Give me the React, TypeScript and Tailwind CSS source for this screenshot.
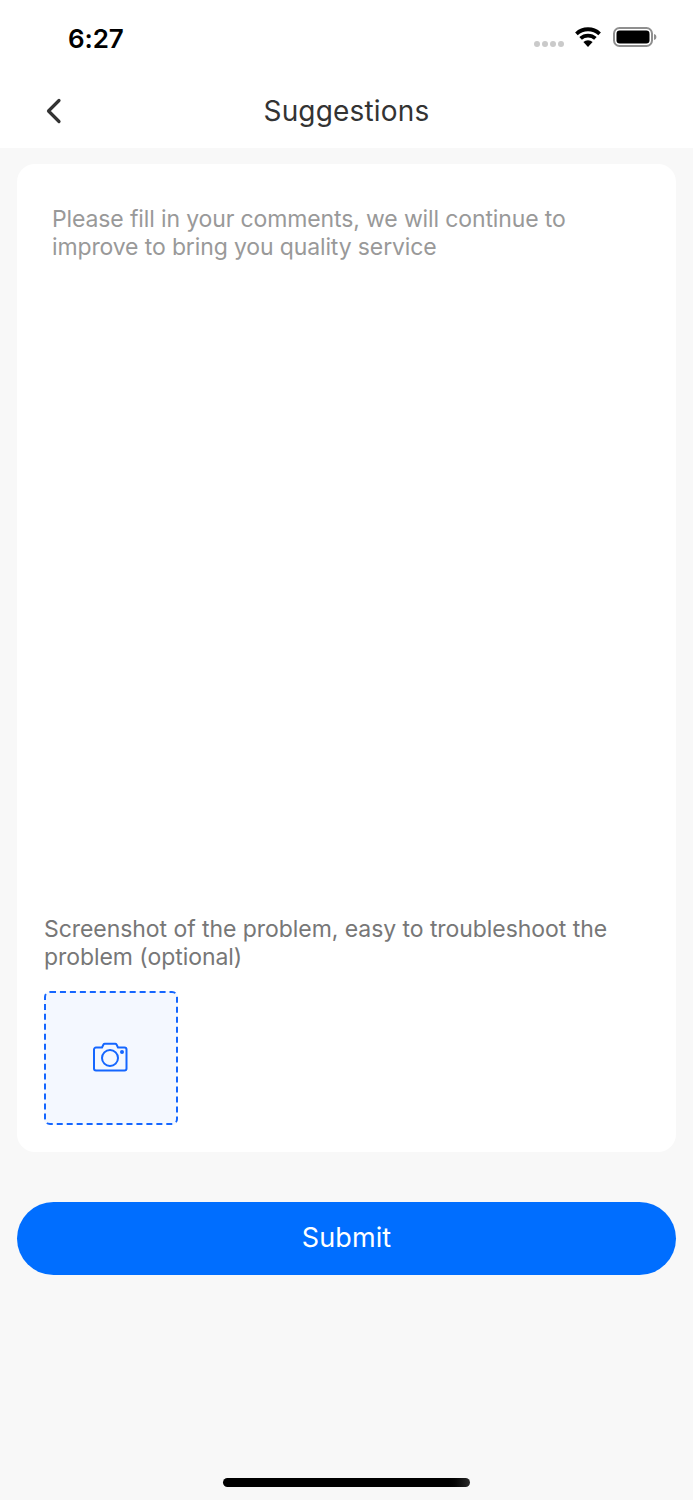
import React from "react";

export default function App() {
  return (
    <div className="relative flex h-[1500px] w-[693px] flex-col overflow-hidden bg-[#f8f8f8] font-['Inter','Liberation_Sans',sans-serif]">
      <header className="h-[148px] bg-white">
        <div className="flex h-[74px] items-center justify-between pl-[68px] pr-[36px]">
          <span className="mt-[2px] text-[26px] font-semibold tracking-[-0.1px] text-black">6:27</span>
          <div className="flex items-center">
            <div className="mt-[14px] mr-[10px] flex gap-[2px]">
              <i className="size-[6px] rounded-full bg-[#cacaca]" />
              <i className="size-[6px] rounded-full bg-[#cacaca]" />
              <i className="size-[6px] rounded-full bg-[#cacaca]" />
              <i className="size-[6px] rounded-full bg-[#cacaca]" />
            </div>
            <svg width="28" height="22" viewBox="0 0 28 22" className="mr-[11px]">
              <path d="M14 21l-4.6-5a6.6 6.6 0 0 1 9.2 0z" fill="#000" />
              <path d="M6.6 12.4a11 11 0 0 1 14.8 0M2.4 7.8a17 17 0 0 1 23.2 0" fill="none" stroke="#000" strokeWidth="3.8" />
            </svg>
            <svg width="44" height="22" viewBox="0 0 44 22">
              <rect x="1" y="2" width="38" height="18" rx="5.5" fill="none" stroke="#8f8f8f" strokeWidth="2" />
              <rect x="3.5" y="4.5" width="33" height="13" rx="3.2" fill="#000" />
              <path d="M41 8c1.6.4 2.4 1.5 2.4 3s-.8 2.6-2.4 3z" fill="#8f8f8f" />
            </svg>
          </div>
        </div>
        <div className="relative flex h-[74px] items-center justify-center">
          <svg width="18" height="26" viewBox="0 0 18 26" className="absolute left-[44px] top-[24px]" fill="none">
            <path d="M15 2.5L4.5 13 15 23.5" stroke="#333" strokeWidth="3.2" strokeLinecap="round" strokeLinejoin="round" />
          </svg>
          <h1 className="text-[28px] font-normal tracking-[0.18px] text-[#333]">Suggestions</h1>
        </div>
      </header>

      <main className="flex flex-col px-[17px] pt-[16px]">
        <section className="flex h-[988px] flex-col rounded-[18px] bg-white">
          <p className="mx-[35px] mt-[41px] flex-1 text-[23px] leading-[28px] tracking-[-0.13px] text-[#999]">
            Please fill in your comments, we will continue to improve to bring you quality service
          </p>
          <p className="mx-[27px] text-[23px] leading-[28px] tracking-[-0.06px] text-[#777]">
            Screenshot of the problem, easy to troubleshoot the problem (optional)
          </p>
          <div className="mx-[27px] mt-[20px] mb-[27px] flex size-[134px] items-center justify-center rounded-[6px] border-2 border-dashed border-[#1466ff] bg-[#f4f8ff]">
            <svg width="36" height="30" viewBox="0 0 36 30" fill="none" className="mr-[2px] mb-[2px]">
              <path d="M2 7.5a2 2 0 0 1 2-2h6l1.5-3a1.5 1.5 0 0 1 1.3-.8h10.4a1.5 1.5 0 0 1 1.3.8l1.5 3h6.5a2 2 0 0 1 2 2v19a2 2 0 0 1-2 2H4a2 2 0 0 1-2-2z" stroke="#1466ff" strokeWidth="2" />
              <circle cx="18" cy="16" r="8" stroke="#1466ff" strokeWidth="2" />
              <circle cx="30" cy="10" r="2" fill="#1466ff" />
            </svg>
          </div>
        </section>
        <button className="mt-[50px] h-[73px] rounded-full bg-[#006eff] text-[27px] tracking-[0.1px] text-white">Submit</button>
      </main>

      <div className="absolute bottom-[13px] left-[223px] h-[9px] w-[247px] rounded-full bg-gradient-to-r from-black from-90% to-[#2a2a2a]" />
    </div>
  );
}
